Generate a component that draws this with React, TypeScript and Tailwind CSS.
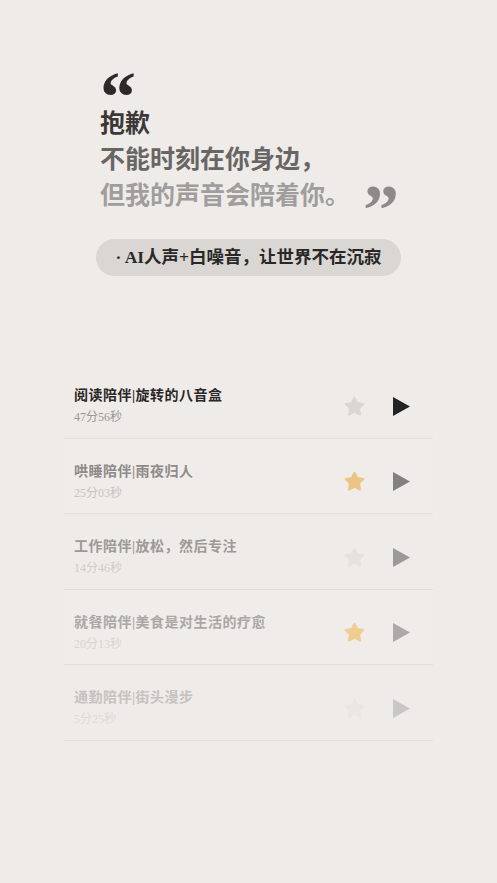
import { Star } from "lucide-react";

type Track = {
  title: string;
  duration: string;
  titleColor: string;
  subColor: string;
  starColor: string;
  playColor: string;
  boxed: boolean;
};

const tracks: Track[] = [
  {
    title: "阅读陪伴|旋转的八音盒",
    duration: "47分56秒",
    titleColor: "text-[#2a2827]",
    subColor: "text-[#9a9693]",
    starColor: "text-[#d9d6d3]",
    playColor: "text-[#232323]",
    boxed: false,
  },
  {
    title: "哄睡陪伴|雨夜归人",
    duration: "25分03秒",
    titleColor: "text-[#8e8a87]",
    subColor: "text-[#c6c2bf]",
    starColor: "text-[#ebc383]",
    playColor: "text-[#828080]",
    boxed: true,
  },
  {
    title: "工作陪伴|放松，然后专注",
    duration: "14分46秒",
    titleColor: "text-[#9d9996]",
    subColor: "text-[#cfcbc8]",
    starColor: "text-[#e4e1de]",
    playColor: "text-[#9c9a99]",
    boxed: false,
  },
  {
    title: "就餐陪伴|美食是对生活的疗愈",
    duration: "20分13秒",
    titleColor: "text-[#aba7a4]",
    subColor: "text-[#d7d3d0]",
    starColor: "text-[#efcd91]",
    playColor: "text-[#acaaa9]",
    boxed: true,
  },
  {
    title: "通勤陪伴|街头漫步",
    duration: "5分25秒",
    titleColor: "text-[#c6c2bf]",
    subColor: "text-[#dedad7]",
    starColor: "text-[#e9e6e3]",
    playColor: "text-[#c9c7c6]",
    boxed: false,
  },
];

const serif = "font-['Liberation_Serif','Noto_Sans_CJK_SC',serif]";

const PlayIcon = ({ className }: { className: string }) => (
  <svg width="17" height="19" viewBox="0 0 17 19" className={className}>
    <polygon points="0,0 17,9.5 0,19" fill="currentColor" />
  </svg>
);

export default function App() {
  return (
    <div className={`min-h-[883px] w-full bg-[#efebe8] ${serif}`}>
      <div className="pt-[52px] pl-[100px] pr-[96px]">
        <div className="h-[50px] text-[72px] font-bold leading-[90px] text-[#2b2a29]">
          “
        </div>
        <div className="mt-[4px] text-[25px] font-bold leading-[36px]">
          <p className="text-[#3b3938]">抱歉</p>
          <p className="text-[#686665]">不能时刻在你身边，</p>
          <div className="flex items-start">
            <p className="text-[#a09e9d]">但我的声音会陪着你。</p>
            <span className="ml-[13px] h-[36px] text-[72px] leading-[64px] text-[#8d8b8a]">
              ”
            </span>
          </div>
        </div>
      </div>

      <div className="mt-[25px] ml-[96px] flex h-[37px] w-[305px] items-center justify-center rounded-full bg-[#d9d6d3] text-[17.5px] font-bold text-[#2a2827]">
        · AI人声+白噪音，让世界不在沉寂
      </div>

      <div className="mt-[87px] mx-[64px]">
        {tracks.map((t) => (
          <div
            key={t.title}
            className={`flex h-[75.5px] items-center border-b border-[#e2dedb] pt-[12px] pl-[10px] pr-[23px] ${
              t.boxed ? "bg-[#f0ecea]" : ""
            }`}
          >
            <div className="flex-1">
              <p className={`text-[14px] font-bold leading-[20px] tracking-[0.5px] ${t.titleColor}`}>
                {t.title}
              </p>
              <p className={`mt-[2px] text-[12px] leading-[18px] ${t.subColor}`}>
                {t.duration}
              </p>
            </div>
            <Star
              size={23}
              strokeWidth={1}
              className={`mr-[27px] fill-current ${t.starColor}`}
            />
            <PlayIcon className={t.playColor} />
          </div>
        ))}
      </div>
    </div>
  );
}
